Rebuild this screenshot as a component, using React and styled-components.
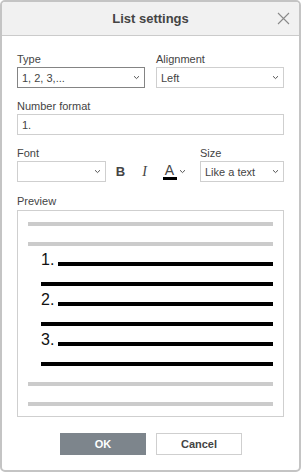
import React from "react";
import styled, { createGlobalStyle } from "styled-components";

const GlobalStyle = createGlobalStyle`
  html, body {
    margin: 0;
    padding: 0;
    background: #fff;
  }
  body {
    font-family: Arial, "Liberation Sans", sans-serif;
  }
`;

const Dialog = styled.div`
  box-sizing: border-box;
  width: 301px;
  height: 472px;
  border: 2px solid #c4c4c4;
  border-radius: 5px;
  overflow: hidden;
  display: flex;
  flex-direction: column;
  color: #444;
`;

const Header = styled.div`
  position: relative;
  height: 33px;
  flex: none;
  background: #f1f1f1;
  border-bottom: 1px solid #cbcbcb;
  display: flex;
  align-items: center;
  justify-content: center;
  font-size: 13px;
  font-weight: bold;
  color: #444;
`;

const Close = styled.button`
  position: absolute;
  right: 9px;
  top: 10px;
  width: 13px;
  height: 13px;
  padding: 0;
  border: none;
  background: none;
  display: flex;
`;

const Body = styled.div`
  padding: 16px 15px 0 15px;
  display: flex;
  flex-direction: column;
  gap: 11px;
`;

const Row = styled.div`
  display: grid;
  grid-template-columns: ${(p) => p.$cols || "1fr"};
  column-gap: ${(p) => p.$gap || 0}px;
  align-items: end;
`;

const Field = styled.div`
  display: flex;
  flex-direction: column;
  margin-top: ${(p) => p.$shift || 0}px;
`;

const Label = styled.div`
  font-size: 11px;
  line-height: 14px;
  margin-bottom: ${(p) => p.$space || 1}px;
  color: #444;
`;

const Select = styled.div`
  box-sizing: border-box;
  height: 21px;
  border: 1px solid ${(p) => (p.$focused ? "#848484" : "#cfcfcf")};
  display: flex;
  align-items: center;
  justify-content: space-between;
  padding: 0 4px 0 4px;
  font-size: 11px;
  color: #444;
  background: #fff;
`;

const Input = styled.div`
  box-sizing: border-box;
  height: 21px;
  border: 1px solid #cfcfcf;
  display: flex;
  align-items: center;
  padding: 0 4px;
  font-size: 11px;
  color: #444;
`;

const Tools = styled.div`
  display: flex;
  align-items: center;
  height: 21px;
  padding-left: 6px;
`;

const ToolBtn = styled.div`
  width: ${(p) => p.$w || 24}px;
  height: 21px;
  flex: none;
  display: flex;
  align-items: center;
  justify-content: ${(p) => (p.$start ? "flex-start" : "center")};
  padding-left: ${(p) => p.$pad || 0}px;
  box-sizing: border-box;
  color: #444;
  font-family: ${(p) => (p.$serif ? '"Liberation Serif", serif' : 'Arial, "Liberation Sans", sans-serif')};
  font-size: ${(p) => (p.$serif ? 14 : 13)}px;
  font-weight: ${(p) => (p.$bold ? "bold" : "normal")};
  font-style: ${(p) => (p.$italic ? "italic" : "normal")};
`;

const ColorA = styled.div`
  display: flex;
  flex-direction: column;
  align-items: center;
  width: 15px;
  font-size: 14px;
  line-height: 14px;
  color: #444;
  &::after {
    content: "";
    width: 14px;
    height: 3px;
    background: #000;
  }
`;

const Caret = styled.span`
  display: flex;
  margin-left: 2px;
`;

const Preview = styled.div`
  box-sizing: border-box;
  height: 207px;
  border: 1px solid #cfcfcf;
  padding: 11px 10px 0 10px;
  display: flex;
  flex-direction: column;
  gap: 16px;
`;

const Line = styled.div`
  height: 4px;
  display: flex;
  align-items: flex-end;
  margin-left: ${(p) => p.$indent || 0}px;
  &::after {
    content: "";
    flex: 1;
    height: 4px;
    background: ${(p) => (p.$gray ? "#cbcbcb" : "#000")};
  }
`;

const Num = styled.span`
  width: 17px;
  flex: none;
  font-size: 16px;
  line-height: 12px;
  color: #111;
`;

const Footer = styled.div`
  display: flex;
  justify-content: center;
  gap: 10px;
  padding-top: 16px;
  padding-left: 1px;
`;

const Button = styled.button`
  box-sizing: border-box;
  width: 86px;
  height: 22px;
  font-family: Arial, "Liberation Sans", sans-serif;
  font-size: 11px;
  font-weight: bold;
  border: 1px solid ${(p) => (p.$primary ? "#7d858c" : "#cfcfcf")};
  background: ${(p) => (p.$primary ? "#7d858c" : "#fff")};
  color: ${(p) => (p.$primary ? "#fff" : "#444")};
  padding: 0;
`;

const Chevron = () => (
  <svg width="7" height="5" viewBox="0 0 7 5">
    <path d="M1 1.2 L3.5 3.6 L6 1.2" fill="none" stroke="#555" strokeWidth="1" />
  </svg>
);

const lines = [
  { gray: true },
  { gray: true },
  { num: "1." },
  { indent: 13 },
  { num: "2." },
  { indent: 13 },
  { num: "3." },
  { indent: 13 },
  { gray: true },
  { gray: true },
];

export default function App() {
  return (
    <>
      <GlobalStyle />
      <Dialog>
        <Header>
          List settings
          <Close aria-label="Close">
            <svg width="13" height="13" viewBox="0 0 13 13">
              <path d="M1 1 L12 12 M12 1 L1 12" stroke="#8a8a8a" strokeWidth="1.1" />
            </svg>
          </Close>
        </Header>
        <Body>
          <Row $cols="128px 128px" $gap={11}>
            <Field>
              <Label>Type</Label>
              <Select $focused>
                1, 2, 3,...
                <Chevron />
              </Select>
            </Field>
            <Field>
              <Label>Alignment</Label>
              <Select>
                Left
                <Chevron />
              </Select>
            </Field>
          </Row>
          <Field>
            <Label>Number format</Label>
            <Input>1.</Input>
          </Field>
          <Row $cols="89px 94px 84px">
            <Field>
              <Label>Font</Label>
              <Select>
                <span />
                <Chevron />
              </Select>
            </Field>
            <Tools>
              <ToolBtn $bold $w={17}>B</ToolBtn>
              <ToolBtn $serif $italic $w={31}>I</ToolBtn>
              <ToolBtn $w={30} $start $pad={2}>
                <ColorA>A</ColorA>
                <Caret>
                  <Chevron />
                </Caret>
              </ToolBtn>
            </Tools>
            <Field>
              <Label>Size</Label>
              <Select>
                Like a text
                <Chevron />
              </Select>
            </Field>
          </Row>
          <Field $shift={1}>
            <Label $space={2}>Preview</Label>
            <Preview>
              {lines.map((l, i) =>
                l.num ? (
                  <Line key={i} $indent={13}>
                    <Num>{l.num}</Num>
                  </Line>
                ) : (
                  <Line key={i} $gray={l.gray} $indent={l.indent} />
                )
              )}
            </Preview>
          </Field>
        </Body>
        <Footer>
          <Button $primary>OK</Button>
          <Button>Cancel</Button>
        </Footer>
      </Dialog>
    </>
  );
}
